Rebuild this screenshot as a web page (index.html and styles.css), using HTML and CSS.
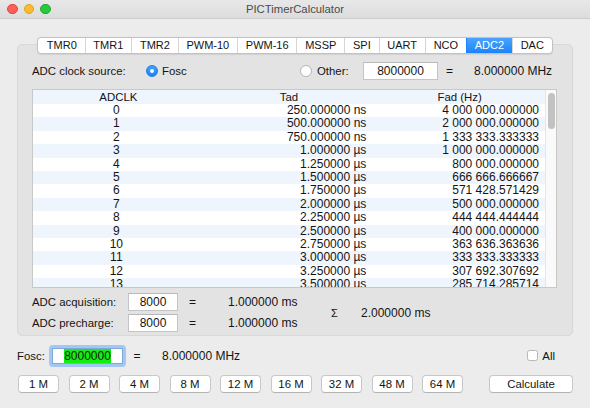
FILE: index.html
```html
<!DOCTYPE html>
<html>
<head>
<meta charset="utf-8">
<title>PICTimerCalculator</title>
<link rel="stylesheet" href="styles.css">
</head>
<body>
<div class="window">
  <div class="titlebar">
    <div class="lights"><span class="light red"></span><span class="light yellow"></span><span class="light green"></span></div>
    <div class="title">PICTimerCalculator</div>
    <div></div>
  </div>

  <div class="tabs">
    <div class="tabstrip">
      <span class="tab">TMR0</span><span class="tab">TMR1</span><span class="tab">TMR2</span><span class="tab">PWM-10</span><span class="tab">PWM-16</span><span class="tab">MSSP</span><span class="tab">SPI</span><span class="tab">UART</span><span class="tab">NCO</span><span class="tab active">ADC2</span><span class="tab">DAC</span>
    </div>
  </div>

  <div class="panel">
    <div class="clock-row">
      <span class="lbl clock-lbl">ADC clock source:</span>
      <span class="radio-opt fosc-opt"><span class="radio checked"></span><span class="lbl">Fosc</span></span>
      <span class="radio-opt other-opt"><span class="radio"></span><span class="lbl">Other:</span></span>
      <span class="field other-field">8000000</span>
      <span class="eq clock-eq">=</span>
      <span class="num">8.000000 MHz</span>
    </div>

    <div class="table">
      <div class="table-body">
        <div class="thead"><span>ADCLK</span><span>Tad</span><span>Fad (Hz)</span></div>
        <div class="trow"><span class="c1">0</span><span class="c2">250.000000 ns</span><span class="c3">4 000 000.000000</span></div>
        <div class="trow"><span class="c1">1</span><span class="c2">500.000000 ns</span><span class="c3">2 000 000.000000</span></div>
        <div class="trow"><span class="c1">2</span><span class="c2">750.000000 ns</span><span class="c3">1 333 333.333333</span></div>
        <div class="trow"><span class="c1">3</span><span class="c2">1.000000 µs</span><span class="c3">1 000 000.000000</span></div>
        <div class="trow"><span class="c1">4</span><span class="c2">1.250000 µs</span><span class="c3">800 000.000000</span></div>
        <div class="trow"><span class="c1">5</span><span class="c2">1.500000 µs</span><span class="c3">666 666.666667</span></div>
        <div class="trow"><span class="c1">6</span><span class="c2">1.750000 µs</span><span class="c3">571 428.571429</span></div>
        <div class="trow"><span class="c1">7</span><span class="c2">2.000000 µs</span><span class="c3">500 000.000000</span></div>
        <div class="trow"><span class="c1">8</span><span class="c2">2.250000 µs</span><span class="c3">444 444.444444</span></div>
        <div class="trow"><span class="c1">9</span><span class="c2">2.500000 µs</span><span class="c3">400 000.000000</span></div>
        <div class="trow"><span class="c1">10</span><span class="c2">2.750000 µs</span><span class="c3">363 636.363636</span></div>
        <div class="trow"><span class="c1">11</span><span class="c2">3.000000 µs</span><span class="c3">333 333.333333</span></div>
        <div class="trow"><span class="c1">12</span><span class="c2">3.250000 µs</span><span class="c3">307 692.307692</span></div>
        <div class="trow"><span class="c1">13</span><span class="c2">3.500000 µs</span><span class="c3">285 714.285714</span></div>
      </div>
      <div class="scrollbar"><div class="thumb"></div></div>
    </div>

    <div class="timing">
      <div class="timing-grid">
        <span class="lbl">ADC acquisition:</span><span class="field small-field">8000</span><span class="eq">=</span><span class="num tval">1.000000 ms</span>
        <span class="lbl">ADC precharge:</span><span class="field small-field">8000</span><span class="eq">=</span><span class="num tval">1.000000 ms</span>
      </div>
      <span class="sigma">Σ</span>
      <span class="num">2.000000 ms</span>
    </div>
  </div>

  <div class="fosc-row">
    <span class="lbl fosc-lbl">Fosc:</span>
    <span class="focus"><span class="field fosc-field"><span class="sel">8000000</span></span></span>
    <span class="eq fosc-eq">=</span>
    <span class="num fosc-val">8.000000 MHz</span>
    <span class="check-opt"><span class="checkbox"></span><span class="lbl">All</span></span>
  </div>

  <div class="buttons-row">
    <span class="btn">1 M</span>
    <span class="btn">2 M</span>
    <span class="btn">4 M</span>
    <span class="btn">8 M</span>
    <span class="btn">12 M</span>
    <span class="btn">16 M</span>
    <span class="btn">32 M</span>
    <span class="btn">48 M</span>
    <span class="btn">64 M</span>
    <span class="btn calc">Calculate</span>
  </div>
</div>
</body>
</html>
```

FILE: styles.css
```css
* { box-sizing: border-box; }
html, body { margin: 0; padding: 0; background: #ececec; }
body {
  font-family: "Liberation Sans", Arial, sans-serif;
  color: #141414;
}
.window {
  width: 590px;
  height: 408px;
  background: #ececec;
  overflow: hidden;
}

/* title bar */
.titlebar {
  height: 19px;
  display: grid;
  grid-template-columns: 1fr auto 1fr;
  align-items: center;
  background: linear-gradient(#e8e8e8, #dcdcdc);
  border-bottom: 1px solid #cdcdcd;
}
.lights { display: flex; gap: 6px; padding-left: 7px; align-items: center; }
.light { width: 10.5px; height: 10.5px; border-radius: 50%; display: block; }
.red { background: #fc5f57; border: 0.5px solid #df4840; }
.yellow { background: #fdbc2e; border: 0.5px solid #dea123; }
.green { background: #28c840; border: 0.5px solid #1fa82f; }
.title { font-size: 11.3px; color: #4b4b4b; }

/* tabs */
.tabs {
  position: relative;
  z-index: 1;
  display: flex;
  justify-content: center;
  margin-top: 18px;
  margin-bottom: -10px;
}
.tabstrip {
  display: flex;
  height: 17px;
  background: #fff;
  border: 1px solid #c2c2c2;
  border-radius: 4px;
  overflow: hidden;
  box-shadow: 0 0.5px 1px rgba(0,0,0,0.08);
}
.tab {
  font-size: 11px;
  line-height: 15px;
  padding: 0 7.8px;
  color: #141414;
  border-left: 1px solid #d6d6d6;
}
.tab:first-child { border-left: none; padding-left: 8.5px; }
.tab.active {
  background: linear-gradient(#4ba4fd, #1b83fb);
  color: #fff;
  border-left-color: #1b83fb;
}

/* panel */
.panel {
  margin: 0 17px;
  background: #e3e3e3;
  border: 1px solid #d8d8d8;
  border-radius: 5px;
  padding: 17px 15px 3px 14px;
}
.lbl { font-size: 11.4px; }
.num { font-size: 12px; }
.eq { font-size: 12px; text-align: center; }

.clock-row { display: flex; align-items: center; height: 18px; }
.clock-lbl { width: 114px; }
.radio-opt { display: flex; align-items: center; }
.fosc-opt { width: 154px; gap: 4px; }
.other-opt { width: 63px; gap: 5px; }
.radio {
  width: 12px; height: 12px; border-radius: 50%;
  background: #fff;
  border: 1px solid #b5b5b5;
  display: flex; align-items: center; justify-content: center;
}
.radio.checked {
  background: linear-gradient(#43a2fb, #1a80f6);
  border-color: #1a7ef0;
}
.radio.checked::after {
  content: "";
  width: 4.5px; height: 4.5px; border-radius: 50%;
  background: #fff;
}
.field {
  display: flex; align-items: center; justify-content: center;
  background: #fff;
  border: 1px solid #c4c4c4;
  border-top-color: #b9b9b9;
  font-size: 12px;
  height: 18px;
}
.other-field { width: 75px; }
.clock-eq { width: 23px; margin-right: 13px; }

/* table */
.table {
  margin-top: 9px;
  height: 199px;
  border: 1px solid #c8c8c8;
  background: #fff;
  display: flex;
  overflow: hidden;
}
.table-body { flex: 1; overflow: hidden; }
.table-body > div:nth-child(odd) { background: #eff5fd; }
.thead { display: flex; height: 14px; line-height: 14px; font-size: 11.4px; }
.thead span { flex: 1; text-align: center; }
.trow { display: flex; height: 13.4px; line-height: 13.4px; font-size: 12px; }
.trow span { flex: 1; white-space: nowrap; }
.c1 { text-align: center; }
.c2, .c3 { text-align: right; padding-right: 6px; }
.scrollbar {
  width: 11px;
  background: #fafafa;
  border-left: 1px solid #e6e6e6;
  padding: 3px 1.5px 0 1.5px;
}
.thumb { width: 7.5px; height: 36px; border-radius: 4px; background: #c2c2c2; }

/* timing */
.timing { display: flex; align-items: center; margin-top: 5px; }
.timing-grid {
  display: grid;
  grid-template-columns: 96px 50px 29px 124px;
  grid-auto-rows: 18px;
  row-gap: 3px;
  align-items: center;
}
.small-field { width: 50px; }
.tval { padding-left: 21px; }
.sigma { width: 30px; font-size: 11px; }

/* fosc row */
.fosc-row {
  display: flex; align-items: center;
  height: 22px;
  margin-top: 9px;
  padding: 0 17px;
}
.fosc-lbl { width: 32px; }
.focus {
  padding: 3px;
  border-radius: 4px;
  background: #a2c7f3;
  display: block;
}
.fosc-field { width: 71px; height: 16px; border-color: #7da9e3; }
.sel { background: #12ee12; line-height: 14px; padding: 0 0.5px; }
.fosc-eq { width: 22px; }
.fosc-val { margin-left: 14px; }
.check-opt { margin-left: auto; margin-right: 18px; display: flex; align-items: center; gap: 4px; margin-top: -1px; }
.checkbox {
  width: 11px; height: 11px;
  background: #fff;
  border: 1px solid #b8b8b8;
  border-radius: 2.5px;
}

/* buttons */
.buttons-row {
  display: flex;
  gap: 9.5px;
  margin-top: 8px;
  padding: 0 17px 0 18px;
}
.btn {
  width: 41px; height: 18px;
  display: flex; align-items: center; justify-content: center;
  background: #fff;
  border: 1px solid #c8c8c8;
  border-bottom-color: #b4b4b4;
  border-radius: 4px;
  font-size: 11.4px;
}
.btn.calc { width: 84px; margin-left: auto; }
```
